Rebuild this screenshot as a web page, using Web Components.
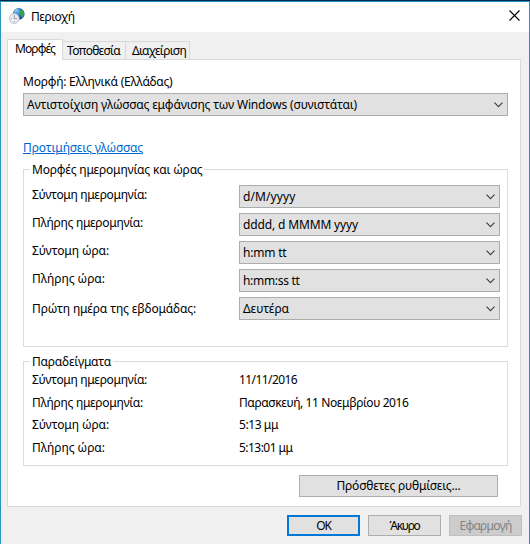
<!DOCTYPE html>
<html lang="el">
<head>
<meta charset="utf-8">
<title>Περιοχή</title>
<style>
html,body{margin:0;padding:0;height:100%;overflow:hidden;background:#f0f0f0}
body{font:12px/16px "Noto Sans","Open Sans",sans-serif;color:#000}
</style>
</head>
<body>
<region-dialog></region-dialog>
<script>
const define=(name,html,init)=>customElements.define(name,class extends HTMLElement{
  constructor(){super();this.attachShadow({mode:'open'}).innerHTML=html;}
  connectedCallback(){if(init)init.call(this,this.shadowRoot);}
});

/* Single line of text, tracked to the advance width given in "w". */
define('ui-text',`<style>:host{display:block;white-space:nowrap;height:16px;line-height:18px}span{display:inline-block;text-decoration:inherit;text-underline-offset:inherit}</style><span><slot></slot></span>`,
function(root){
  const w=parseFloat(this.getAttribute('w'));
  const s=root.querySelector('span');
  const n=[...this.textContent].length;
  const nat=s.getBoundingClientRect().width;
  if(w&&nat)s.style.letterSpacing=((w-nat)/n).toFixed(3)+'px';
});

define('app-icon',`<style>:host{display:block;width:16px;height:16px}svg{display:block}</style>
<svg width="16" height="16" viewBox="0 0 16 16">
<defs><radialGradient id="g" cx=".45" cy=".3" r=".75"><stop offset="0" stop-color="#6fc0f5"/><stop offset=".45" stop-color="#1f6bd0"/><stop offset="1" stop-color="#0a2a80"/></radialGradient></defs>
<circle cx="9.700" cy="5.900" r="5.800" fill="url(#g)"/>
<path d="M6.400 1.400Q8 .4 9.600 .8L9 2.400 7.400 3.400 6.600 4.800 5 4.600Q5 3 6.400 1.400Z" fill="#8fc9c0"/>
<path d="M10.600 2.600L13.400 2.200Q15.400 4.400 15.200 7L13.600 9.200 12.400 10.200 11.600 7.600 10.200 6Z" fill="#37a447"/>
<circle cx="5.300" cy="10.500" r="4.900" fill="#e9edf1" stroke="#b4bcc6" stroke-width=".9"/>
<path d="M5.300 7.200V10.900M5.300 10.700H8M2 10.600h1M5.300 13.300v1" stroke="#8791a0" stroke-width=".9" fill="none"/>
</svg>`);

define('title-bar',`<style>
:host{display:flex;height:30px;background:#fff;align-items:flex-start}
app-icon{margin:6px 0 0 8px}
.title{margin:6px 0 0 6px;flex:1}
svg{display:block;margin:8px 9px 0 0}
</style><app-icon></app-icon><div class="title"><slot></slot></div>
<svg width="11" height="11" viewBox="0 0 11 11"><path d="M.5.5l10 10M10.500.5l-10 10" stroke="#000" stroke-width="1.100"/></svg>`);

define('tab-item',`<style>
:host{display:block;box-sizing:border-box;height:18px;border:1px solid #d9d9d9;border-left:0;border-bottom:0;background:#f0f0f0;padding:0 0 0 var(--pad,4px);width:var(--w)}
:host([selected]){height:21px;border-left:1px solid #d9d9d9;background:#fff;padding-left:7px;margin-bottom:-1px;position:relative}
</style><slot></slot>`);

define('combo-box',`<style>
:host{display:flex;box-sizing:border-box;height:23px;border:1px solid #adadad;background:#e1e1e1;padding:2px 4px 0 3px;justify-content:space-between}
svg{display:block;margin-top:6px}
</style><slot></slot><svg width="9" height="6" viewBox="0 0 9 6"><path d="M.5.7l4 4 4-4" fill="none" stroke="#444" stroke-width="1.200"/></svg>`);

define('group-box',`<style>
:host{display:block;box-sizing:border-box;border:1px solid #dcdcdc;padding-top:var(--top)}
.legend{display:flex;height:0}
.legend span{display:block;height:16px;margin:calc(-9px - var(--top)) 0 0 6px;padding:0 2px;background:#fff}
</style><div class="legend"><span><slot name="legend"></slot></span></div><slot></slot>`);

define('field-row',`<style>
:host{display:grid;grid-template-columns:207px 261px;height:28px;padding-left:8px;align-items:start}
</style><slot></slot>`);

define('push-button',`<style>
:host{display:flex;box-sizing:border-box;width:73px;height:21px;border:1px solid #adadad;background:#e1e1e1;justify-content:center;padding-top:1px}
:host([default]){border:2px solid #0078d7;padding-top:0}
:host([disabled]){border-color:#bfbfbf;background:#ccc;color:#838383}
</style><slot></slot>`);

define('region-dialog',`<style>
:host{display:flex;flex-direction:column;box-sizing:border-box;width:530px;height:544px;border:1px solid #2c96bf;border-bottom:0;border-top:0;background:#f0f0f0}
.edge{height:1px;background:#04264a;margin:0 -1px;border-bottom:1px solid #2492bd}
.tabs{display:flex;align-items:flex-end;height:20px;padding:7px 0 0 6px}
.panel{box-sizing:border-box;width:514px;height:448px;margin-left:6px;border:1px solid #d9d9d9;background:#fff;padding:13px 12px 0 15px}
.panel>combo-box{margin-top:4px}
.link{color:#0066cc;margin:23px 0 0;text-decoration:underline 1px;text-underline-offset:1px}
.formats{height:178px;margin-top:14px;--top:15px}
.formats field-row>ui-text{margin-top:1px}
.formats field-row:last-of-type>ui-text{margin-top:3px}
.examples{height:105px;margin-top:14px;--top:9px}
.examples field-row{height:22.700px}
.more{width:199px;height:22px;margin:9px 0 0 276px;padding-top:1px}
.actions{display:flex;gap:8px;justify-content:flex-end;padding:8px 7px 0 0}
</style>
<div class="edge"></div>
<title-bar><ui-text w="43.500">Περιοχή</ui-text></title-bar>
<div class="tabs">
<tab-item selected style="--w:56px"><ui-text w="40">Μορφές</ui-text></tab-item>
<tab-item style="--w:63px"><ui-text w="53">Τοποθεσία</ui-text></tab-item>
<tab-item style="--w:64px;--pad:6px"><ui-text w="54">Διαχείριση</ui-text></tab-item>
</div>
<div class="panel">
<ui-text w="149.500">Μορφή: Ελληνικά (Ελλάδας)</ui-text>
<combo-box><ui-text w="330">Αντιστοίχιση γλώσσας εμφάνισης των Windows (συνιστάται)</ui-text></combo-box>
<ui-text class="link" w="120">Προτιμήσεις γλώσσας</ui-text>
<group-box class="formats"><ui-text slot="legend" w="170.500">Μορφές ημερομηνίας και ώρας</ui-text>
<field-row><ui-text w="115">Σύντομη ημερομηνία:</ui-text><combo-box><ui-text w="52.500">d/M/yyyy</ui-text></combo-box></field-row>
<field-row><ui-text w="111">Πλήρης ημερομηνία:</ui-text><combo-box><ui-text w="115">dddd, d MMMM yyyy</ui-text></combo-box></field-row>
<field-row><ui-text w="77">Σύντομη ώρα:</ui-text><combo-box><ui-text w="43.500">h:mm tt</ui-text></combo-box></field-row>
<field-row><ui-text w="73">Πλήρης ώρα:</ui-text><combo-box><ui-text w="56.500">h:mm:ss tt</ui-text></combo-box></field-row>
<field-row><ui-text w="164">Πρώτη ημέρα της εβδομάδας:</ui-text><combo-box><ui-text w="46">Δευτέρα</ui-text></combo-box></field-row>
</group-box>
<group-box class="examples"><ui-text slot="legend" w="79">Παραδείγματα</ui-text>
<field-row><ui-text w="115">Σύντομη ημερομηνία:</ui-text><ui-text w="58">11/11/2016</ui-text></field-row>
<field-row><ui-text w="111">Πλήρης ημερομηνία:</ui-text><ui-text w="169.500">Παρασκευή, 11 Νοεμβρίου 2016</ui-text></field-row>
<field-row><ui-text w="77">Σύντομη ώρα:</ui-text><ui-text w="39">5:13 μμ</ui-text></field-row>
<field-row><ui-text w="73">Πλήρης ώρα:</ui-text><ui-text w="53.500">5:13:01 μμ</ui-text></field-row>
</group-box>
<push-button class="more"><ui-text w="124">Πρόσθετες ρυθμίσεις...</ui-text></push-button>
</div>
<div class="actions">
<push-button default><ui-text w="14.500">OK</ui-text></push-button>
<push-button><ui-text w="30">Άκυρο</ui-text></push-button>
<push-button disabled><ui-text w="52">Εφαρμογή</ui-text></push-button>
</div>`);
</script>
</body>
</html>
